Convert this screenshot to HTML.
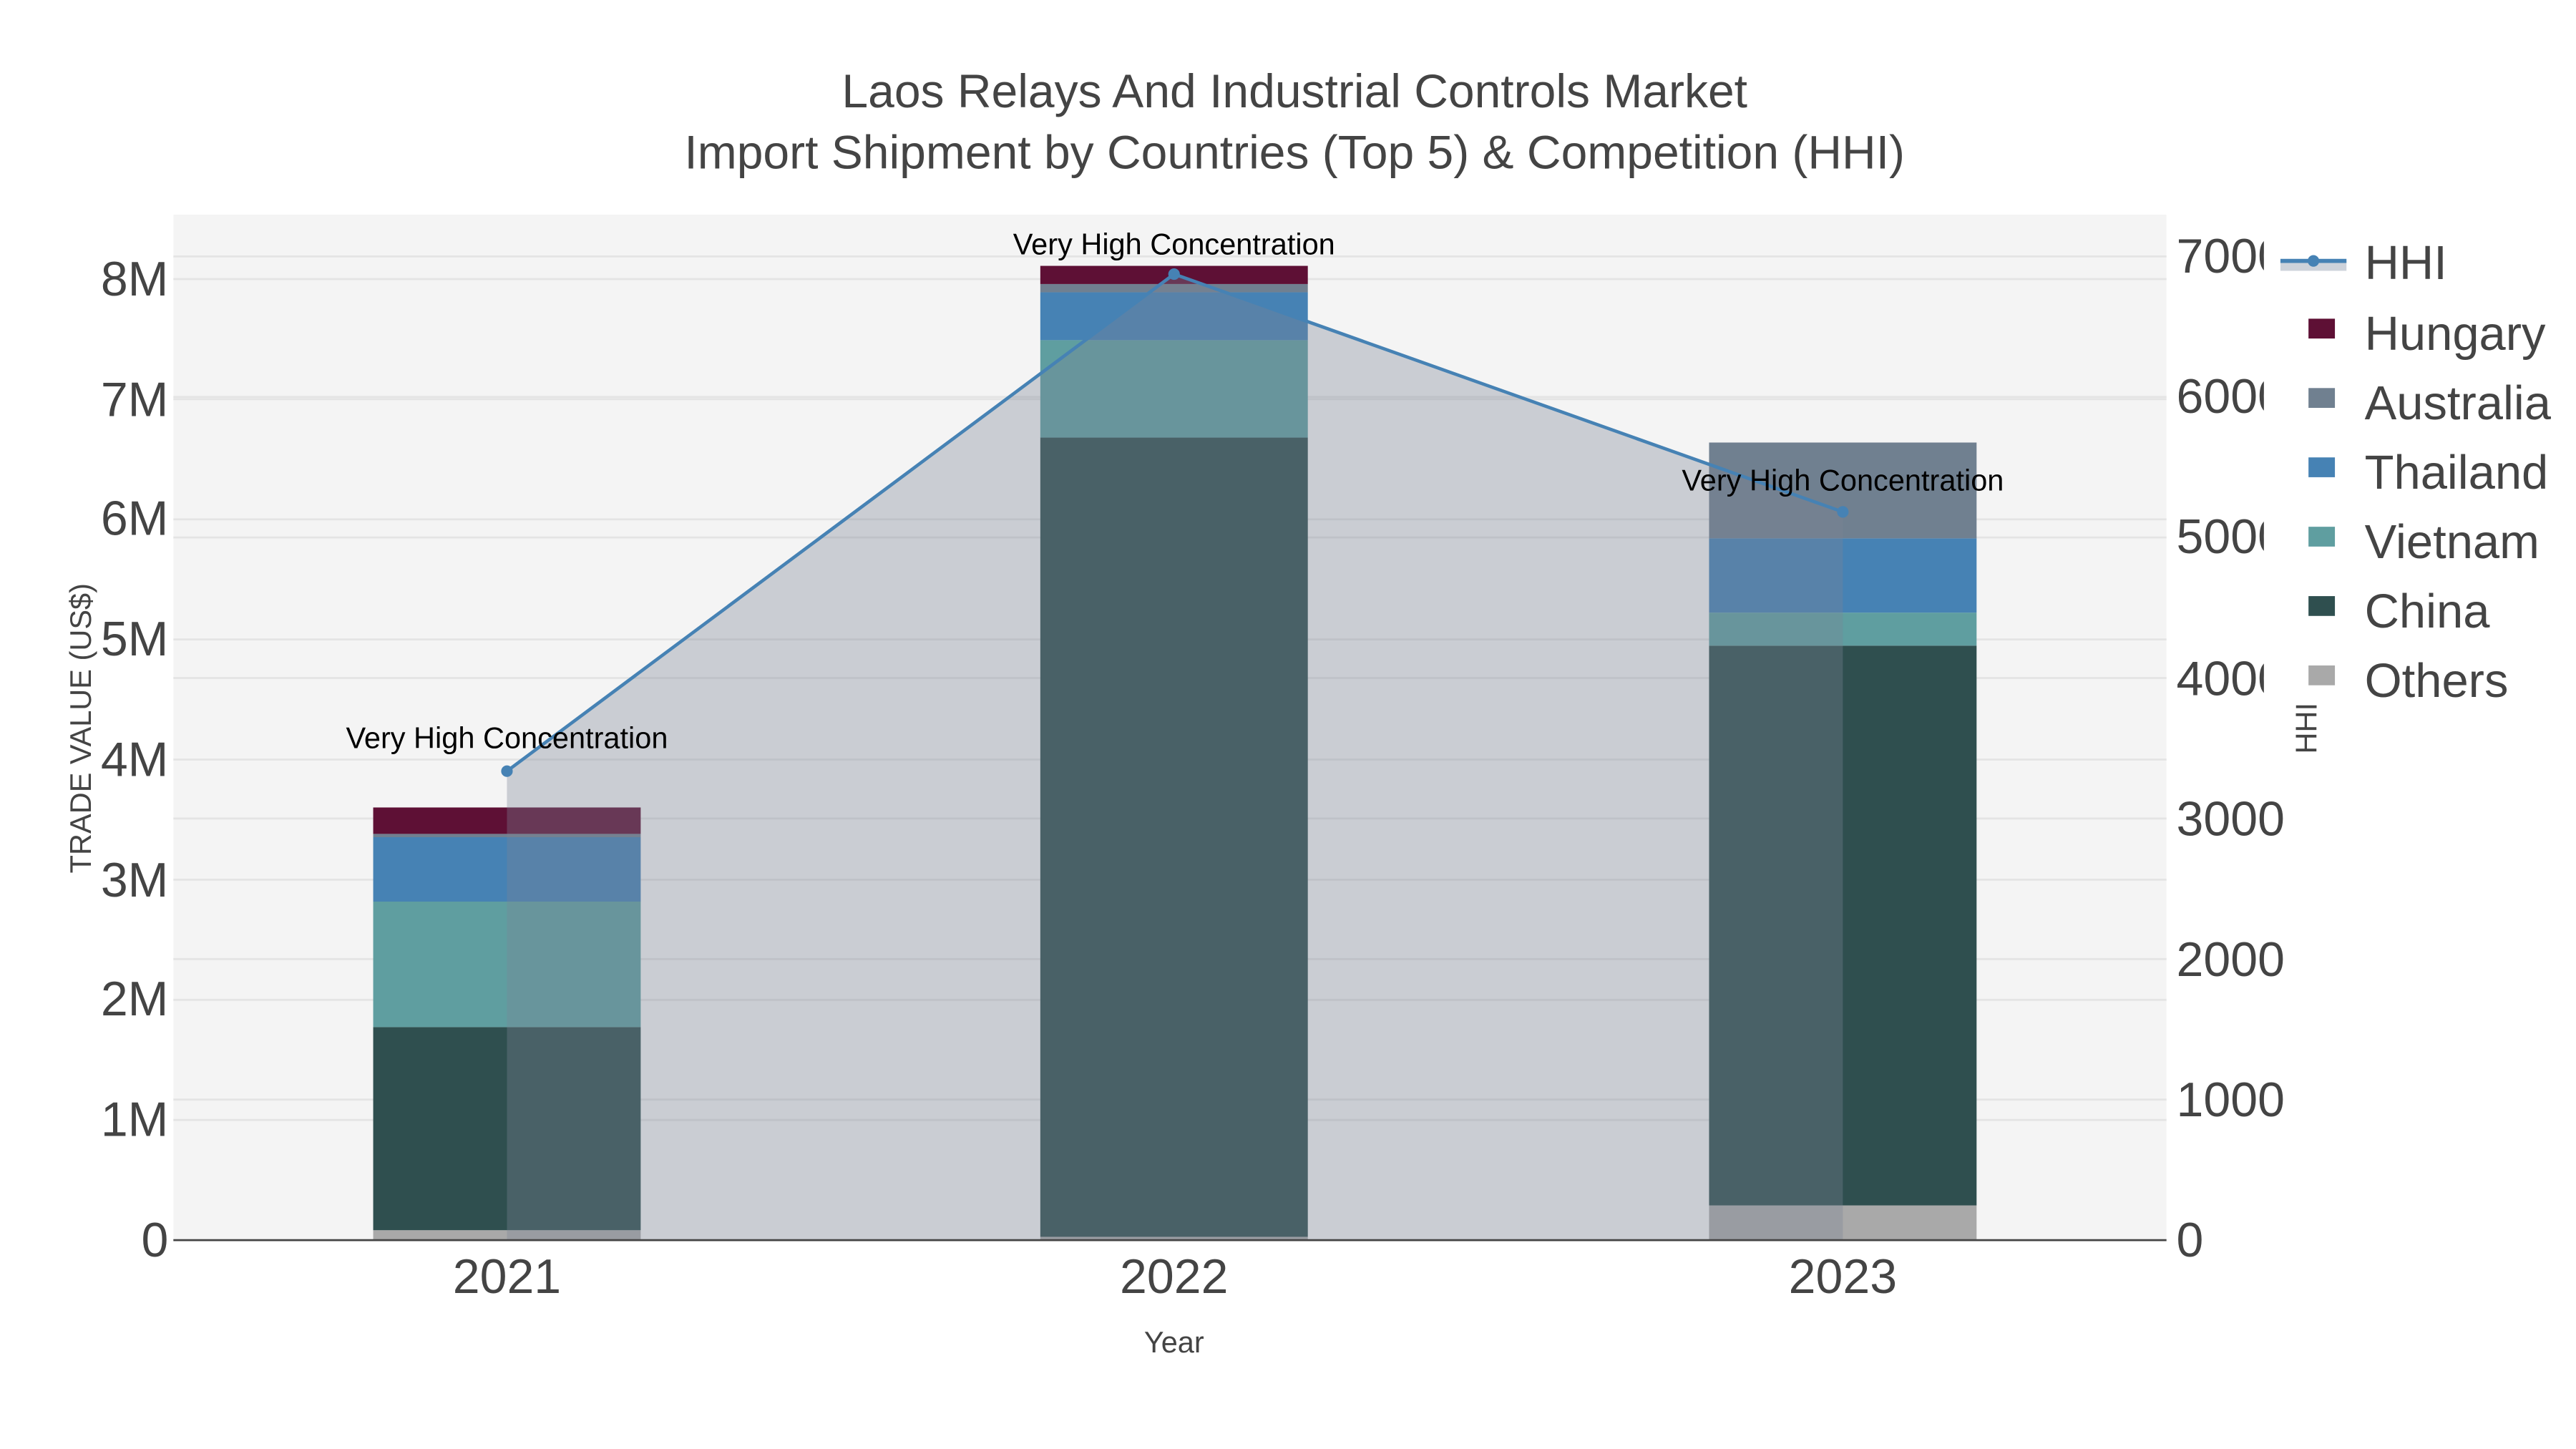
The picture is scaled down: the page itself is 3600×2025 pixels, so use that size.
<!DOCTYPE html>
<html><head><meta charset="utf-8"><style>html,body{margin:0;padding:0;background:#fff}svg{display:block}text{font-family:"Liberation Sans",sans-serif}</style></head>
<body>
<svg width="3600" height="2025" viewBox="0 0 1560 877.5" xmlns="http://www.w3.org/2000/svg">
<rect width="1560" height="877.5" fill="#fff"/>
<rect x="105" y="130" width="1207" height="621" fill="#f4f4f4"/>
<g stroke="#e4e4e4" stroke-width="1.2">
<line x1="105" x2="1312" y1="678.25" y2="678.25"/><line x1="105" x2="1312" y1="605.5" y2="605.5"/>
<line x1="105" x2="1312" y1="532.75" y2="532.75"/><line x1="105" x2="1312" y1="460" y2="460"/>
<line x1="105" x2="1312" y1="387.25" y2="387.25"/><line x1="105" x2="1312" y1="314.5" y2="314.5"/>
<line x1="105" x2="1312" y1="241.75" y2="241.75"/><line x1="105" x2="1312" y1="169" y2="169"/>
<line x1="105" x2="1312" y1="665.9" y2="665.9"/><line x1="105" x2="1312" y1="580.8" y2="580.8"/>
<line x1="105" x2="1312" y1="495.7" y2="495.7"/><line x1="105" x2="1312" y1="410.6" y2="410.6"/>
<line x1="105" x2="1312" y1="325.5" y2="325.5"/><line x1="105" x2="1312" y1="240.4" y2="240.4"/>
<line x1="105" x2="1312" y1="155.3" y2="155.3"/>
</g>
<g>
<rect x="226" y="745" width="162" height="6" fill="#a9a9a9"/>
<rect x="226" y="622" width="162" height="123" fill="#2f4f4f"/>
<rect x="226" y="546" width="162" height="76" fill="#5f9ea0"/>
<rect x="226" y="507" width="162" height="39" fill="#4682b4"/>
<rect x="226" y="505" width="162" height="2" fill="#708090"/>
<rect x="226" y="489" width="162" height="16" fill="#5e1035"/>

<rect x="630" y="749" width="162" height="2" fill="#a9a9a9"/>
<rect x="630" y="265" width="162" height="484" fill="#2f4f4f"/>
<rect x="630" y="206" width="162" height="59" fill="#5f9ea0"/>
<rect x="630" y="177" width="162" height="29" fill="#4682b4"/>
<rect x="630" y="172" width="162" height="5" fill="#708090"/>
<rect x="630" y="161" width="162" height="11" fill="#5e1035"/>

<rect x="1035" y="730" width="162" height="21" fill="#a9a9a9"/>
<rect x="1035" y="391" width="162" height="339" fill="#2f4f4f"/>
<rect x="1035" y="371" width="162" height="20" fill="#5f9ea0"/>
<rect x="1035" y="326" width="162" height="45" fill="#4682b4"/>
<rect x="1035" y="268" width="162" height="58" fill="#708090"/>
</g>
<polygon points="307,751 307,467 711,166 1116,310 1116,751" fill="rgb(122,132,150)" fill-opacity="0.35"/>
<line x1="105" x2="1312" y1="751" y2="751" stroke="#444" stroke-width="1.2"/>
<polyline points="307,467 711,166 1116,310" fill="none" stroke="#4682b4" stroke-width="2"/>
<circle cx="307" cy="467" r="3.5" fill="#4682b4"/><circle cx="711" cy="166" r="3.5" fill="#4682b4"/><circle cx="1116" cy="310" r="3.5" fill="#4682b4"/>
<g font-size="18" fill="#000" text-anchor="middle">
<text x="307" y="453">Very High Concentration</text>
<text x="711" y="154">Very High Concentration</text>
<text x="1116" y="297">Very High Concentration</text>
</g>
<g fill="#444" font-size="28.6" text-anchor="middle">
<text x="784" y="65">Laos Relays And Industrial Controls Market</text>
<text x="784" y="102">Import Shipment by Countries (Top 5) &amp; Competition (HHI)</text>
</g>
<g fill="#444" font-size="29.5" text-anchor="end">
<text x="102" y="761">0</text><text x="102" y="688">1M</text><text x="102" y="615">2M</text>
<text x="102" y="543">3M</text><text x="102" y="470">4M</text><text x="102" y="397">5M</text>
<text x="102" y="324">6M</text><text x="102" y="252">7M</text><text x="102" y="179">8M</text>
</g>
<g fill="#444" font-size="29.5">
<text x="1318" y="761">0</text><text x="1318" y="676">1000</text><text x="1318" y="591">2000</text>
<text x="1318" y="506">3000</text><text x="1318" y="421">4000</text><text x="1318" y="335">5000</text>
<text x="1318" y="250">6000</text><text x="1318" y="165">7000</text>
</g>
<rect x="1371" y="130" width="189" height="320" fill="#fff"/>
<g fill="#444" font-size="29.5" text-anchor="middle">
<text x="307" y="783">2021</text><text x="711" y="783">2022</text><text x="1116" y="783">2023</text>
</g>
<text x="711" y="819" fill="#444" font-size="18" text-anchor="middle">Year</text>
<text transform="translate(55,441) rotate(-90)" fill="#444" font-size="18" text-anchor="middle">TRADE VALUE (US$)</text>
<text transform="translate(1403,441) rotate(-90)" fill="#444" font-size="18" text-anchor="middle">HHI</text>
<rect x="1381" y="158" width="40" height="6" fill="#cdd2da"/>
<line x1="1381" x2="1421" y1="158" y2="158" stroke="#4682b4" stroke-width="2.5"/>
<circle cx="1401" cy="158" r="3.5" fill="#4682b4"/>
<rect x="1398" y="193" width="16" height="12" fill="#5e1035"/>
<rect x="1398" y="235" width="16" height="12" fill="#708090"/>
<rect x="1398" y="277" width="16" height="12" fill="#4682b4"/>
<rect x="1398" y="319" width="16" height="12" fill="#5f9ea0"/>
<rect x="1398" y="361" width="16" height="12" fill="#2f4f4f"/>
<rect x="1398" y="403" width="16" height="12" fill="#a9a9a9"/>
<g fill="#444" font-size="29">
<text x="1432" y="169">HHI</text><text x="1432" y="212">Hungary</text><text x="1432" y="254">Australia</text>
<text x="1432" y="296">Thailand</text><text x="1432" y="338">Vietnam</text><text x="1432" y="380">China</text>
<text x="1432" y="422">Others</text>
</g>
</svg>
</body></html>
